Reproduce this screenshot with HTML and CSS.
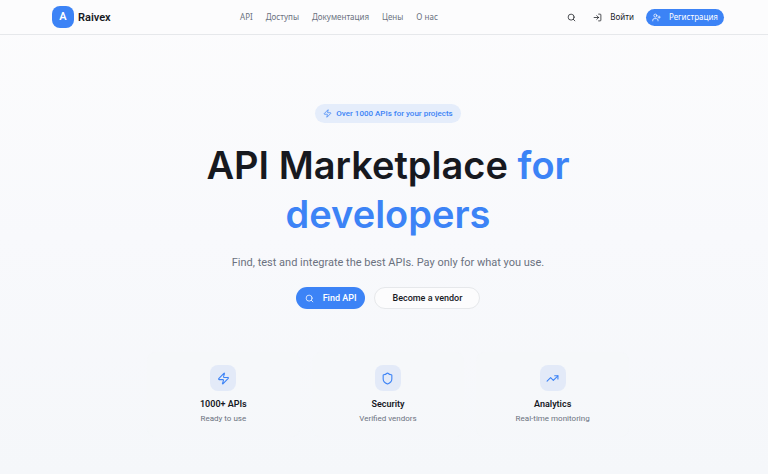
FILE: index.html
```
<!DOCTYPE html>
<html lang="ru">
<head>
    <meta charset="UTF-8">
    <meta name="viewport" content="width=device-width, initial-scale=1.0">
    <title>Raivex</title>
    <link rel="stylesheet" href="styles.css">
</head>
<body>

    <header class="header">
        <div class="container">
            <a class="logo" href="#">
                <span class="logo-mark">A</span>
                <span>Raivex</span>
            </a>
            <nav class="nav">
                <a href="#">API</a>
                <a href="#">Доступы</a>
                <a href="#">Документация</a>
                <a href="#">Цены</a>
                <a href="#">О нас</a>
            </nav>
            <div class="actions">
                <button class="btn-search" aria-label="Поиск">
                    <svg class="icon" viewBox="0 0 24 24"><circle cx="11" cy="11" r="8"/><path d="m21 21-4.3-4.3"/></svg>
                </button>
                <a class="login" href="#">
                    <svg class="icon" viewBox="0 0 24 24"><path d="M15 3h4a2 2 0 0 1 2 2v14a2 2 0 0 1-2 2h-4"/><path d="m10 17 5-5-5-5"/><path d="M15 12H3"/></svg>
                    Войти
                </a>
                <a class="register" href="#">
                    <svg class="icon" viewBox="0 0 24 24"><path d="M16 21v-2a4 4 0 0 0-4-4H6a4 4 0 0 0-4 4v2"/><circle cx="9" cy="7" r="4"/><path d="M19 8v6"/><path d="M22 11h-6"/></svg>
                    Регистрация
                </a>
            </div>
        </div>
    </header>

    <main class="hero">
        <div class="badge">
            <svg class="icon" viewBox="0 0 24 24"><path d="M4 14a1 1 0 0 1-.78-1.63l9.9-10.2a.5.5 0 0 1 .86.46l-1.92 6.02A1 1 0 0 0 13 10h7a1 1 0 0 1 .78 1.63l-9.9 10.2a.5.5 0 0 1-.86-.46l1.92-6.02A1 1 0 0 0 11 14z"/></svg>
            Over 1000 APIs for your projects
        </div>
        <h1>API Marketplace <span>for<br>developers</span></h1>
        <p class="lead">Find, test and integrate the best APIs. Pay only for what you use.</p>
        <div class="buttons">
            <button class="btn btn-primary">
                <svg class="icon" viewBox="0 0 24 24"><circle cx="11" cy="11" r="8"/><path d="m21 21-4.3-4.3"/></svg>
                Find API
            </button>
            <button class="btn btn-outline">Become a vendor</button>
        </div>

        <div class="cards">
            <div class="card">
                <div class="card-icon">
                    <svg viewBox="0 0 24 24"><path d="M4 14a1 1 0 0 1-.78-1.63l9.9-10.2a.5.5 0 0 1 .86.46l-1.92 6.02A1 1 0 0 0 13 10h7a1 1 0 0 1 .78 1.63l-9.9 10.2a.5.5 0 0 1-.86-.46l1.92-6.02A1 1 0 0 0 11 14z"/></svg>
                </div>
                <h3>1000+ APIs</h3>
                <p>Ready to use</p>
            </div>
            <div class="card">
                <div class="card-icon">
                    <svg viewBox="0 0 24 24"><path d="M20 13c0 5-3.5 7.5-7.66 8.95a1 1 0 0 1-.67-.01C7.5 20.5 4 18 4 13V6a1 1 0 0 1 1-1c2 0 4.5-1.2 6.24-2.72a1.17 1.17 0 0 1 1.52 0C14.51 3.81 17 5 19 5a1 1 0 0 1 1 1z"/></svg>
                </div>
                <h3>Security</h3>
                <p>Verified vendors</p>
            </div>
            <div class="card">
                <div class="card-icon">
                    <svg viewBox="0 0 24 24"><path d="m22 7-8.500 8.500-5-5L2 17"/><path d="M16 7h6v6"/></svg>
                </div>
                <h3>Analytics</h3>
                <p>Real-time monitoring</p>
            </div>
        </div>
    </main>

</body>
</html>
```
FILE: styles.css
```
*{
    margin: 0;
    padding: 0;
    box-sizing: border-box;
}

body {
    min-height: 100vh;
    font-family: Roboto, "Liberation Sans", sans-serif;
    color: #17191f;
    background: linear-gradient(#fcfcfd, #f8f9fc 50%, #f5f7fa);
}

a{
    color: inherit;
    text-decoration: none;
}

button{
    font-family: inherit;
    color: inherit;
    border: none;
    background: none;
    cursor: pointer;
}

svg{
    fill: none;
    stroke: currentColor;
    stroke-width: 2;
    stroke-linecap: round;
    stroke-linejoin: round;
}

.icon{
    width: 9px;
    height: 9px;
    flex: none;
}

/* header */
.header{
    padding-left: 8px;
    background-color: #fcfcfd;
    border-bottom: 1px solid #e6e8eb;
}

.container{
    display: flex;
    justify-content: space-between;
    align-items: center;
    height: 34px;
    padding: 0 44px;
}

.logo{
    display: flex;
    align-items: center;
    gap: 4px;
    font-size: 11px;
    font-weight: 600;
}

.logo-mark{
    width: 22px;
    height: 22px;
    border-radius: 8px;
    background-color: #3c83f6;
    color: white;
    line-height: 22px;
    text-align: center;
}

.nav, .actions{
    display: flex;
    align-items: center;
    font-family: "Noto Sans", sans-serif;
    font-size: 8px;
    line-height: 10px;
    white-space: nowrap;
}

.nav{
    gap: 13px;
    color: #6b7280;
}

.btn-search{
    display: flex;
    margin-right: 17px;
}

.login, .register{
    display: flex;
    align-items: center;
    gap: 8px;
}

.login{
    margin-right: 12px;
}

.register{
    height: 17px;
    padding: 0 6px;
    border-radius: 9px;
    background-color: #3c83f6;
    color: white;
}

/* hero */
.hero{
    display: flex;
    flex-direction: column;
    align-items: center;
    padding: 69px 0 24px 8px;
    text-align: center;
}

.badge{
    display: flex;
    align-items: center;
    gap: 4px;
    height: 19px;
    padding: 0 8px;
    border-radius: 10px;
    background-color: #e5edfb;
    color: #3c83f6;
    font-size: 8px;
    font-weight: 500;
}

h1{
    margin-top: 18px;
    font-family: Inter, "Liberation Sans", sans-serif;
    font-size: 38px;
    font-weight: 600;
    line-height: 49px;
}

h1 span{
    color: #3c83f6;
}

.lead{
    margin-top: 16px;
    font-size: 11px;
    line-height: 16px;
    color: #6b7280;
}

.buttons{
    display: flex;
    gap: 9px;
    margin-top: 16px;
}

.btn{
    display: flex;
    align-items: center;
    gap: 9px;
    height: 22px;
    border-radius: 11px;
    font-size: 9px;
    font-weight: 500;
}

.btn-primary{
    padding: 0 9px;
    background-color: #3c83f6;
    color: white;
}

.btn-outline{
    padding: 0 17px;
    border: 1px solid #e6e8eb;
    background-color: #fcfcfd;
}

.cards{
    display: grid;
    grid-template-columns: repeat(3, 1fr);
    gap: 12px;
    width: 64%;
    max-width: 482px;
    margin-top: 43px;
}

.card{
    padding: 13px 12px;
    border-radius: 9px;
    background-color: rgb(245, 248, 250, 0.5);
}

.card-icon{
    display: flex;
    align-items: center;
    justify-content: center;
    width: 26px;
    height: 26px;
    margin: 0 auto;
    border-radius: 8px;
    background-color: #e3eaf8;
    color: #3c83f6;
}

.card-icon svg{
    width: 13px;
    height: 13px;
}

.card h3{
    margin-top: 7px;
    font-size: 9px;
    font-weight: 600;
    line-height: 13px;
}

.card p{
    margin-top: 2px;
    font-size: 8px;
    line-height: 11px;
    color: #6b7280;
}
```
